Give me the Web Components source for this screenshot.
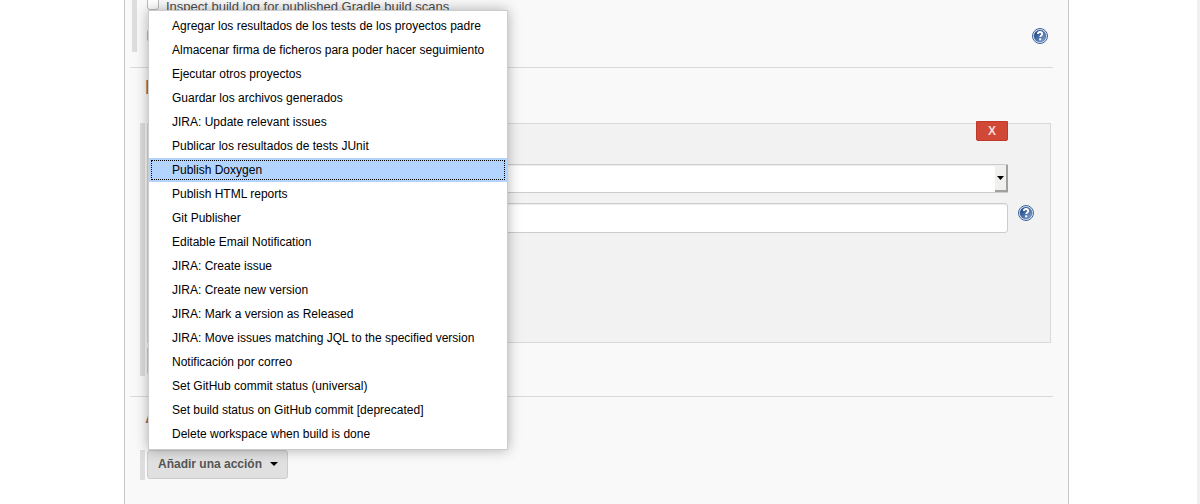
<!DOCTYPE html>
<html lang="es">
<head>
<meta charset="utf-8">
<title>Configuración del proyecto</title>
<style>
  html, body { margin: 0; height: 100%; }
  body { font: 12px/16px "Liberation Sans", Arial, sans-serif; color: #4d4d4d; background: #fff; }
  .steps { --heading-gap: 26px; }
</style>
</head>
<body>
<config-page>
  <config-section>
    <check-row>Inspect build log for published Gradle build scans</check-row>
    <check-row help></check-row>
  </config-section>
  <config-section class="divided steps" heading="E" nested>
    <build-step></build-step>
    <action-button name="Añadir un nuevo paso"></action-button>
  </config-section>
  <config-section class="divided" heading="A" nested>
    <action-button label="Añadir una acción">
      <action-menu slot="menu">
        <menu-item>Agregar los resultados de los tests de los proyectos padre</menu-item>
        <menu-item>Almacenar firma de ficheros para poder hacer seguimiento</menu-item>
        <menu-item>Ejecutar otros proyectos</menu-item>
        <menu-item>Guardar los archivos generados</menu-item>
        <menu-item>JIRA: Update relevant issues</menu-item>
        <menu-item>Publicar los resultados de tests JUnit</menu-item>
        <menu-item selected>Publish Doxygen</menu-item>
        <menu-item>Publish HTML reports</menu-item>
        <menu-item>Git Publisher</menu-item>
        <menu-item>Editable Email Notification</menu-item>
        <menu-item>JIRA: Create issue</menu-item>
        <menu-item>JIRA: Create new version</menu-item>
        <menu-item>JIRA: Mark a version as Released</menu-item>
        <menu-item>JIRA: Move issues matching JQL to the specified version</menu-item>
        <menu-item>Notificación por correo</menu-item>
        <menu-item>Set GitHub commit status (universal)</menu-item>
        <menu-item>Set build status on GitHub commit [deprecated]</menu-item>
        <menu-item>Delete workspace when build is done</menu-item>
      </action-menu>
    </action-button>
  </config-section>
</config-page>

<script>
const define = (name, render) => customElements.define(name, class extends HTMLElement {
  constructor() { super(); this.attachShadow({ mode: 'open' }); }
  connectedCallback() { this.shadowRoot.innerHTML = render(this); }
});

define('config-page', () => `
  <style>
    :host { display: flex; min-height: 100vh; }
    main { flex: 1; min-width: 0; margin: 0 128px 0 124px; padding: 0 15px 0 5px;
      border: solid #c8c8c8; border-width: 0 1px; background: #f9f9f9; }
    .track { width: 3px; background: #f0f0f0; }
    /* the form is scrolled, so its first row starts above the window */
    .form { margin-top: -4px; }
    ::slotted(.divided) { margin-top: 15px; border-top: 1px solid #d9d9d9; }
  </style>
  <main><div class="form"><slot></slot></div></main>
  <div class="track"></div>`);

define('config-section', el => `
  <style>
    :host { display: block; }
    h2 { margin: 0; padding: 9px 0 var(--heading-gap, 24px) 15px; font-size: 20px; line-height: 20px; color: #a0765c; }
    .group { display: flex; gap: 10px; padding-left: 2px; }
    .group.nested { gap: 2px; padding: 0 2px 5px 10px; }
    .handle { width: 5px; background: #ddd; }
    .body { flex: 1; min-width: 0; }
    .group:not(.nested) .body { display: grid; gap: 16px; padding-bottom: 8px; }
  </style>
  ${el.hasAttribute('heading') ? `<h2>${el.getAttribute('heading')}</h2>` : ''}
  <div class="group ${el.hasAttribute('nested') ? 'nested' : ''}">
    <div class="handle"></div>
    <div class="body"><slot></slot></div>
  </div>`);

define('help-icon', () => `
  <style>
    :host { display: block; width: 16px; height: 16px; }
    a, svg { display: block; }
  </style>
  <a href="#ayuda" aria-label="Ayuda">
    <svg width="16" height="16" viewBox="0 0 16 16">
      <defs><linearGradient id="g" x1="0" y1="0" x2="1" y2="1">
        <stop offset=".15" stop-color="#204a87"/><stop offset=".9" stop-color="#7c9ccb"/>
      </linearGradient></defs>
      <circle cx="8" cy="8" r="7.500" fill="#fff" stroke="#3a619c"/>
      <circle cx="8" cy="8" r="6.100" fill="url(#g)" stroke="#3a619c" stroke-width=".5"/>
      <path d="M5.900 6.100C5.900 4.500 7 4 8 4c1.300 0 2.200.7 2.200 1.900 0 1.500-2 1.600-2 3.200" fill="none" stroke="#fff" stroke-width="1.800"/>
      <path d="M7.200 10.300h2v2h-2z" fill="#fff"/>
    </svg>
  </a>`);

define('check-row', el => `
  <style>
    :host { display: flex; justify-content: space-between; height: 16px; padding-right: 5px; }
    label { display: flex; gap: 7px; font-size: 13px; line-height: 22px; }
    input { appearance: none; box-sizing: border-box; width: 12px; height: 13px; margin: 1px 0 0;
      border: 1px solid #bbb; border-radius: 3px; background: #fff; }
  </style>
  <label><input type="checkbox" ${el.textContent ? '' : 'aria-label="Opción"'}><slot></slot></label>
  ${el.hasAttribute('help') ? '<help-icon></help-icon>' : ''}`);

define('build-step', () => `
  <style>
    :host { display: block; border: 1px solid #d9d9d9; background: #f2f2f2; margin-bottom: 3px; }
    form { display: grid; grid-template-columns: minmax(0, 1fr) 16px; column-gap: 10px;
      align-items: start; padding: 0 16px 109px 130px; }
    button { grid-column: 1; justify-self: end; width: 32px; height: 20px; margin: -3px 0 23px;
      padding: 0; font: bold 12px/18px "Liberation Sans", Arial, sans-serif; color: #f5dcd9;
      background: #d14836; border: 1px solid #c03a2b; border-radius: 0 0 2px 2px; }
    .select { grid-column: 1; position: relative; height: 29px; margin-bottom: 10px; }
    select, input { appearance: none; box-sizing: border-box; display: block; width: 100%; margin: 0;
      padding: 0 8px; font: inherit; color: inherit; background: #fff; border: 1px solid #ccc;
      box-shadow: inset 0 1px 1px #eee; }
    select { height: 29px; border-radius: 0; }
    input { grid-column: 1; height: 30px; border-radius: 3px; }
    .arrow { position: absolute; top: 1px; right: 0; bottom: 1px; width: 13px; box-sizing: border-box;
      display: grid; place-items: center; background: #f0f0ee; border: solid #a0a0a0;
      border-width: 0 2px 2px 0; pointer-events: none; }
    help-icon { margin-top: 2px; }
  </style>
  <form>
    <button type="button">X</button>
    <div class="select">
      <select aria-label="Versión"><option></option></select>
      <span class="arrow"><svg width="7" height="4" viewBox="0 0 7 4"><path d="M0 0h7L3.500 4z"/></svg></span>
    </div>
    <input type="text" aria-label="Goles">
    <help-icon></help-icon>
  </form>`);

define('action-button', el => {
  const label = el.getAttribute('label') || '';
  return `
  <style>
    :host { display: block; position: relative; height: 30px; }
    button { display: inline-flex; align-items: center; gap: 8px; box-sizing: border-box; height: 29px;
      min-width: 141px; padding: 0 9px 1px 10px; font: bold 12px/16px "Liberation Sans", Arial, sans-serif;
      color: #555; background: #e0e0e0; border: 1px solid #ccc; border-radius: 3px; }
    svg { margin-left: auto; }
    slot { display: block; position: absolute; left: 1px; bottom: 100%; }
  </style>
  <button type="button" aria-haspopup="menu" aria-label="${label || el.getAttribute('name')}">${label}
    <svg width="8" height="4" viewBox="0 0 8 4"><path d="M0 0h8L4 4z"/></svg>
  </button>
  <slot name="menu"></slot>`;
});

define('action-menu', () => `
  <style>
    :host { display: block; box-sizing: border-box; width: 360px; padding: 3px 0; background: #fff;
      border: 1px solid #ccc; box-shadow: 0 0 12px rgba(0, 0, 0, .3); }
  </style>
  <div role="menu"><slot></slot></div>`);

define('menu-item', () => `
  <style>
    :host { display: block; }
    a { display: block; padding: 0 23px; line-height: 24px; color: #000; text-decoration: none; white-space: nowrap; }
    :host([selected]) a { background: #b3d4ff; outline: 1px dotted #000; outline-offset: -3px; }
  </style>
  <a href="#accion" role="menuitem"><slot></slot></a>`);
</script>
</body>
</html>
